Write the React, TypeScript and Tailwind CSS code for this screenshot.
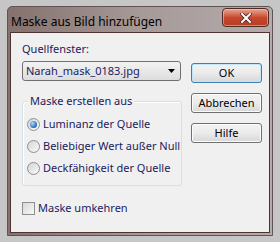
import React from "react";

const font = { fontFamily: '"Noto Sans", "DejaVu Sans", sans-serif' };

function Radio({ checked, label }: { checked?: boolean; label: string }) {
  return (
    <div className="flex items-center gap-[3px] h-[22px]">
      <div className="w-[13px] h-[13px] shrink-0 rounded-full border border-[#8e8f8f] bg-gradient-to-br from-[#d4d4d4] to-[#fafafa] flex items-center justify-center">
        {checked && (
          <div className="w-[7px] h-[7px] rounded-full bg-[radial-gradient(circle_at_35%_35%,#a8dcff,#1d5fb0_75%)]" />
        )}
      </div>
      <span className="text-[11px] text-[#1b1b5e] whitespace-nowrap">{label}</span>
    </div>
  );
}

function Btn({ label, def }: { label: string; def?: boolean }) {
  return (
    <div
      className={
        "w-[71px] h-[20px] rounded-[3px] border flex items-center justify-center text-[11px] text-black bg-gradient-to-b from-[#f3f3f3] via-[#ebebeb] to-[#d7d7d7] " +
        (def ? "border-[#3c7fb1] shadow-[inset_0_0_0_1px_#c2e6f8]" : "border-[#707070] shadow-[inset_0_0_0_1px_#fcfcfc]")
      }
    >
      {label}
    </div>
  );
}

export default function App() {
  return (
    <div className="w-[280px] h-[242px] bg-[#c6c6c6] pt-[6px] px-[7px] pb-[6px]" style={font}>
      <div className="w-full h-full border border-[#5e5454] rounded-t-[5px] bg-gradient-to-r from-[#85716e] via-[#a69a99] to-[#b5abab] flex flex-col px-[2px] pb-[2px]">
        <div className="h-[25px] shrink-0 flex items-start justify-between pl-[1px] pr-[1px]">
          <span className="text-[12px] text-black leading-[16px] mt-[7px] whitespace-nowrap">Maske aus Bild hinzufügen</span>
          <div className="w-[47px] h-[19px] mt-[1px] rounded-[4px] border border-[#4e2a24] bg-gradient-to-b from-[#e6a592] via-[#c8482e] to-[#b63c22] shadow-[inset_0_0_0_1px_rgba(255,210,200,0.5)] flex items-center justify-center">
            <svg width="12" height="10" viewBox="0 0 12 10">
              <path d="M2 1 L10 9 M10 1 L2 9" stroke="#4a2a24" strokeWidth="3.6" strokeLinecap="square" />
              <path d="M2 1 L10 9 M10 1 L2 9" stroke="#ffffff" strokeWidth="2" strokeLinecap="square" />
            </svg>
          </div>
        </div>
        <div className="flex-1 bg-[#f0f0f0] border border-[#4c3434] flex flex-col pl-[11px] pr-[8px] pt-[8px]">
          <div className="text-[11px] text-[#1b1b5e] leading-[16px]">Quellfenster:</div>
          <div className="flex gap-[9px] mt-[4px]">
            <div className="flex flex-col">
              <div className="w-[159px] h-[20px] rounded-[3px] border border-[#707070] bg-gradient-to-b from-[#f3f3f3] to-[#dddddd] flex items-center justify-between pl-[3px] pr-[5px]">
                <span className="text-[11px] text-[#1b1b5e] whitespace-nowrap">Narah_mask_0183.jpg</span>
                <svg width="7" height="4" viewBox="0 0 7 4"><path d="M0 0 H7 L3.5 4 Z" fill="#000" /></svg>
              </div>
              <div className="relative mt-[20px] w-[160px] h-[85px] border border-[#d5dfe5] rounded-[3px] shadow-[inset_1px_1px_0_#ffffff] pl-[4px] pt-[11px]">
                <span className="absolute -top-[9px] left-[5px] bg-[#f0f0f0] px-[2px] text-[11px] text-[#1b1b5e] leading-[16px] whitespace-nowrap">Maske erstellen aus</span>
                <Radio checked label="Luminanz der Quelle" />
                <Radio label="Beliebiger Wert außer Null" />
                <Radio label="Deckfähigkeit der Quelle" />
              </div>
            </div>
            <div className="flex flex-col gap-[10px] mt-[2px]">
              <Btn label="OK" def />
              <Btn label="Abbrechen" />
              <Btn label="Hilfe" />
            </div>
          </div>
          <div className="flex items-center gap-[3px] mt-[14px]">
            <div className="w-[13px] h-[13px] border border-[#8e8f8f] bg-gradient-to-br from-[#d8d8d8] to-[#f8f8f8]" />
            <span className="text-[11px] text-[#1b1b5e] whitespace-nowrap">Maske umkehren</span>
          </div>
        </div>
      </div>
    </div>
  );
}
